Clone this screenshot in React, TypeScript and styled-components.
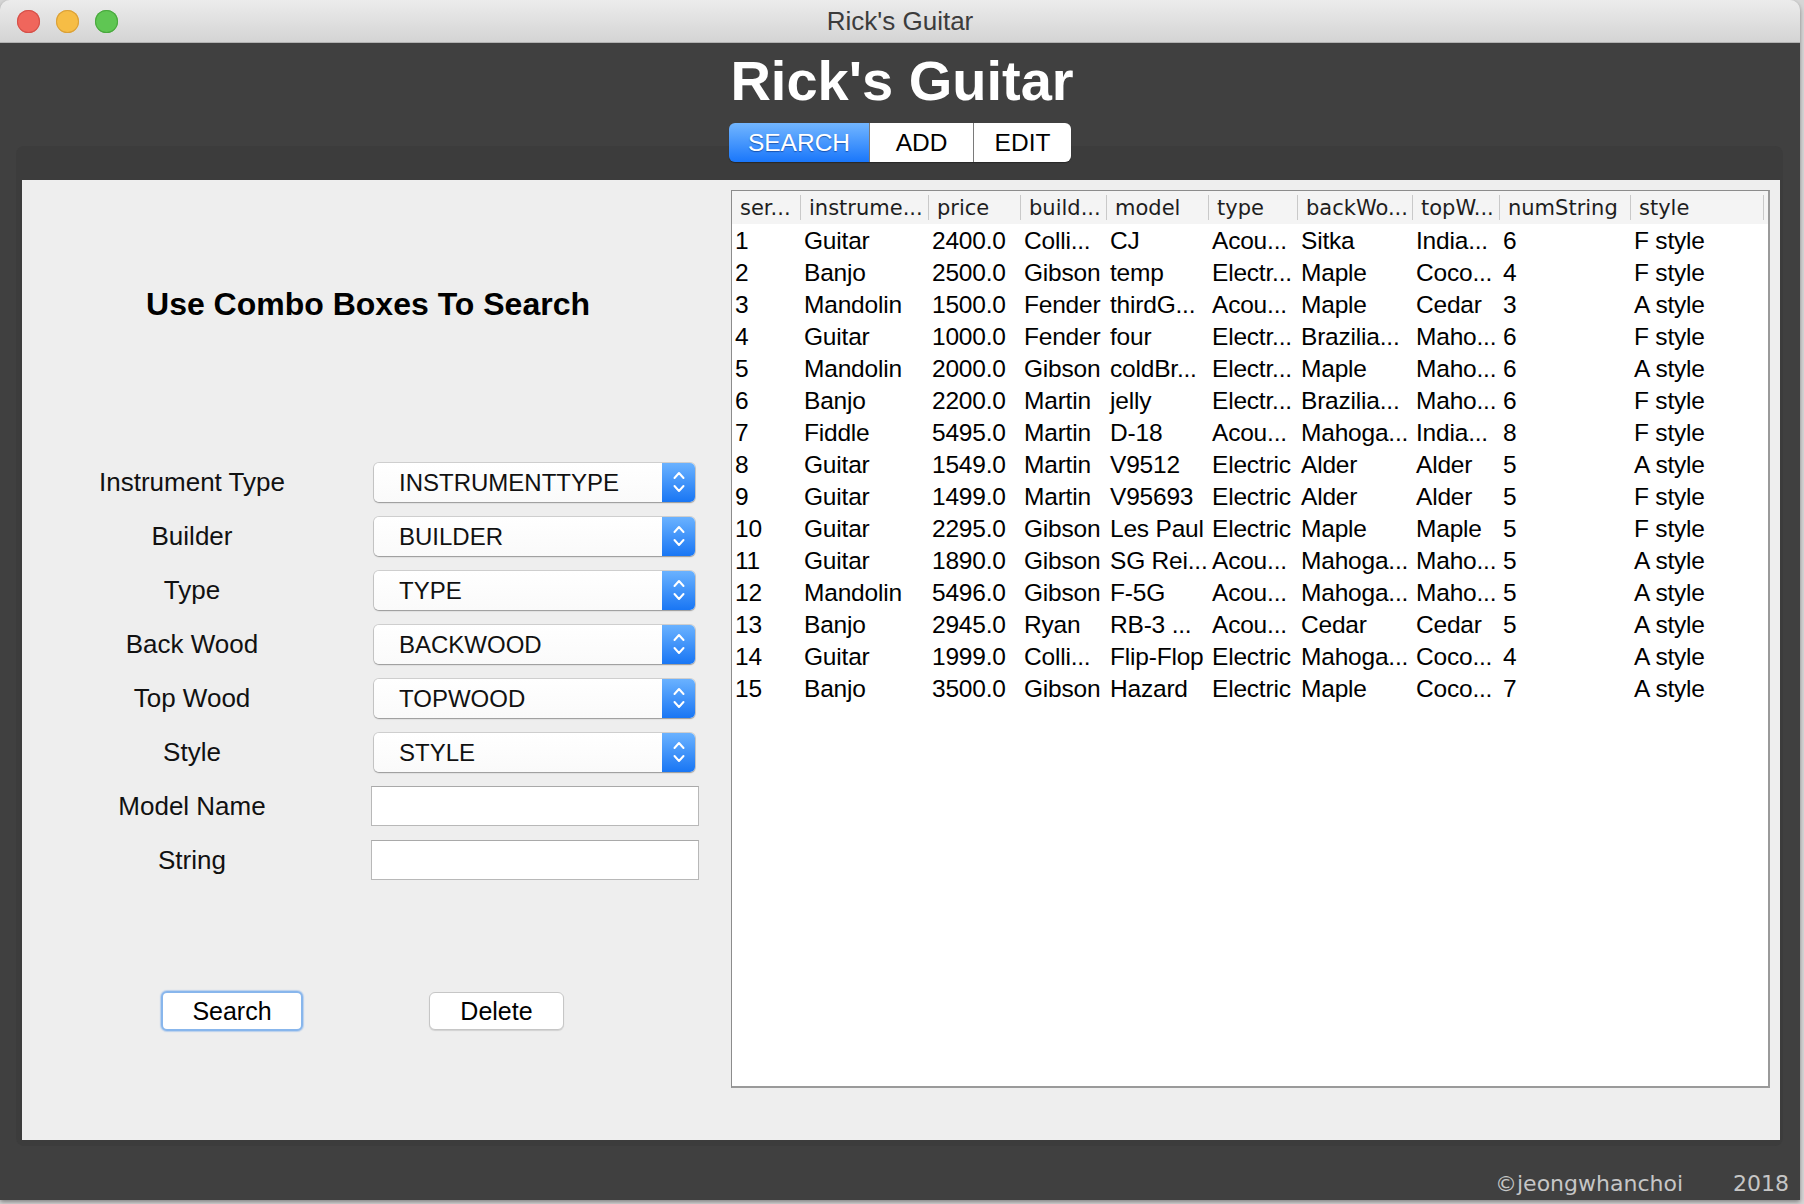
import React from "react";
import styled, { createGlobalStyle } from "styled-components";

const GlobalStyle = createGlobalStyle`
  html, body { margin: 0; padding: 0; }
  body {
    background: #d6d6d6;
    width: 1804px;
    height: 1204px;
    overflow: hidden;
    font-family: "Liberation Sans", Arial, sans-serif;
  }
  * { box-sizing: border-box; }
`;

const COLS = "69px 128px 92px 86px 102px 89px 115px 87px 131px 133px 1fr";

const Window = styled.div`
  width: 1800px;
  height: 1200px;
  display: flex;
  flex-direction: column;
  border-radius: 10px 10px 0 0;
  overflow: hidden;
  box-shadow: 0 2px 4px rgba(0, 0, 0, 0.4);
`;

const TitleBar = styled.header`
  height: 43px;
  border-bottom: 1px solid #b2b2b2;
  background: linear-gradient(#ececec, #d4d4d4);
  display: grid;
  grid-template-columns: 200px 1fr 200px;
  align-items: center;
`;

const Lights = styled.div`
  display: flex;
  gap: 16px;
  padding-left: 17px;
`;

const Light = styled.span<{ $c: string; $b: string }>`
  width: 23px;
  height: 23px;
  border-radius: 50%;
  background: ${(p) => p.$c};
  box-shadow: inset 0 0 0 1px ${(p) => p.$b};
`;

const WindowTitle = styled.div`
  text-align: center;
  font: 26px/30px "Liberation Sans", Arial, sans-serif;
  color: #3c3c3c;
`;

const Main = styled.main`
  flex: 1;
  background: #404040;
  display: flex;
  flex-direction: column;
  align-items: center;
`;

const Heading = styled.h1`
  margin: 6px 0 0 4px;
  font: bold 56px/64px "Liberation Sans", Arial, sans-serif;
  color: #ffffff;
`;

const Tabs = styled.div`
  margin-top: 10px;
  display: flex;
  height: 39px;
  position: relative;
  z-index: 1;
  border-radius: 6px;
  overflow: hidden;
  box-shadow: 0 1px 1px rgba(0, 0, 0, 0.35);
`;

const Tab = styled.div<{ $active?: boolean; $w: number }>`
  width: ${(p) => p.$w}px;
  display: flex;
  align-items: center;
  justify-content: center;
  font: 24.5px/39px "Liberation Sans", Arial, sans-serif;
  color: ${(p) => (p.$active ? "#ffffff" : "#000000")};
  background: ${(p) =>
    p.$active ? "linear-gradient(#72b6ff, #1a77fb)" : "#ffffff"};
  text-shadow: ${(p) => (p.$active ? "0 1px 1px rgba(0, 40, 120, 0.55)" : "none")};
  & + & {
    border-left: 1px solid #7a7a7a;
  }
`;

const Pane = styled.section`
  align-self: flex-start;
  margin: -16px 0 0 16px;
  width: 1767px;
  padding: 34px 3px 6px 6px;
  background: #3c3c3c;
  border-radius: 8px;
`;

const Content = styled.div`
  height: 960px;
  background: #eeeeee;
  display: grid;
  grid-template-columns: 709px 1fr;
  padding: 10px 10px 52px 0;
`;

const LeftCol = styled.div`
  display: flex;
  flex-direction: column;
  padding-top: 96px;
`;

const FormTitle = styled.h2`
  margin: 0;
  padding-right: 17px;
  text-align: center;
  font: bold 32px/37px "Liberation Sans", Arial, sans-serif;
  color: #000;
`;

const Form = styled.div`
  margin-top: 139px;
  display: grid;
  grid-template-columns: 340px 1fr;
  grid-auto-rows: 40px;
  column-gap: 9px;
  row-gap: 14px;
  align-items: center;
`;

const Label = styled.label`
  text-align: center;
  font: 26px/30px "Liberation Sans", Arial, sans-serif;
  color: #111;
`;

const Combo = styled.div`
  margin-left: 3px;
  width: 321px;
  height: 39px;
  display: flex;
  border-radius: 5px;
  background: linear-gradient(#ffffff, #fafafa);
  box-shadow: 0 0 0 1px rgba(0, 0, 0, 0.13), 0 1px 1.5px rgba(0, 0, 0, 0.28);
  overflow: hidden;
`;

const ComboText = styled.span`
  flex: 1;
  padding-left: 25px;
  font: 24px/39px "Liberation Sans", Arial, sans-serif;
  color: #111;
`;

const ComboArrow = styled.span`
  width: 33px;
  background: linear-gradient(#6ab2ff, #1976f4);
  display: flex;
  align-items: center;
  justify-content: center;
`;

const TextField = styled.div`
  width: 328px;
  height: 40px;
  background: #ffffff;
  border: 1px solid #b8b8b8;
  border-top-color: #a9a9a9;
`;

const Buttons = styled.div`
  margin-top: 111px;
  display: flex;
  align-items: center;
  gap: 126px;
  padding-left: 139px;
`;

const Button = styled.div<{ $focused?: boolean; $w: number }>`
  width: ${(p) => p.$w}px;
  height: ${(p) => (p.$focused ? 40 : 38)}px;
  display: flex;
  align-items: center;
  justify-content: center;
  border-radius: 6px;
  background: #ffffff;
  font: 25px/30px "Liberation Sans", Arial, sans-serif;
  color: #000;
  border: ${(p) => (p.$focused ? "2px solid #88b6ec" : "1px solid #c6c6c6")};
  box-shadow: ${(p) =>
    p.$focused ? "0 0 1px 1px rgba(120, 170, 235, 0.45)" : "0 1px 1px rgba(0, 0, 0, 0.12)"};
`;

const Table = styled.div`
  background: #ffffff;
  border: 1px solid #8c8c8c;
  border-right: 2px solid #9a9a9a;
  border-bottom: 2px solid #9a9a9a;
  display: flex;
  flex-direction: column;
  overflow: hidden;
`;

const HeaderRow = styled.div`
  display: grid;
  grid-template-columns: ${COLS};
  height: 33px;
  background: #f4f4f4;
`;

const HeaderCell = styled.div<{ $divider?: boolean }>`
  position: relative;
  padding-left: 8px;
  font: 21px/34px "DejaVu Sans", Verdana, sans-serif;
  color: #1e1e1e;
  white-space: nowrap;
  overflow: hidden;
  &::after {
    content: "";
    display: ${(p) => (p.$divider ? "block" : "none")};
    position: absolute;
    right: 0;
    top: 4px;
    bottom: 4px;
    width: 1px;
    background: #c9c9c9;
  }
`;

const Rows = styled.div`
  padding-top: 1px;
`;

const Row = styled.div`
  display: grid;
  grid-template-columns: ${COLS};
  height: 32px;
`;

const Cell = styled.div`
  padding-left: 3px;
  font: 24.5px/32px "Liberation Sans", Arial, sans-serif;
  letter-spacing: -0.2px;
  color: #000;
  white-space: nowrap;
  overflow: hidden;
`;

const Footer = styled.footer`
  align-self: stretch;
  flex: 1;
  display: flex;
  justify-content: flex-end;
  align-items: flex-end;
  gap: 50px;
  padding: 0 11px 3px 0;
  font: 22px/27px "DejaVu Sans", Verdana, sans-serif;
  color: #c6c6c6;
`;

const headers = [
  "ser...",
  "instrume...",
  "price",
  "build...",
  "model",
  "type",
  "backWo...",
  "topW...",
  "numString",
  "style",
  "",
];

const data: string[][] = [
  ["1", "Guitar", "2400.0", "Colli...", "CJ", "Acou...", "Sitka", "India...", "6", "F style"],
  ["2", "Banjo", "2500.0", "Gibson", "temp", "Electr...", "Maple", "Coco...", "4", "F style"],
  ["3", "Mandolin", "1500.0", "Fender", "thirdG...", "Acou...", "Maple", "Cedar", "3", "A style"],
  ["4", "Guitar", "1000.0", "Fender", "four", "Electr...", "Brazilia...", "Maho...", "6", "F style"],
  ["5", "Mandolin", "2000.0", "Gibson", "coldBr...", "Electr...", "Maple", "Maho...", "6", "A style"],
  ["6", "Banjo", "2200.0", "Martin", "jelly", "Electr...", "Brazilia...", "Maho...", "6", "F style"],
  ["7", "Fiddle", "5495.0", "Martin", "D-18", "Acou...", "Mahoga...", "India...", "8", "F style"],
  ["8", "Guitar", "1549.0", "Martin", "V9512", "Electric", "Alder", "Alder", "5", "A style"],
  ["9", "Guitar", "1499.0", "Martin", "V95693", "Electric", "Alder", "Alder", "5", "F style"],
  ["10", "Guitar", "2295.0", "Gibson", "Les Paul", "Electric", "Maple", "Maple", "5", "F style"],
  ["11", "Guitar", "1890.0", "Gibson", "SG Rei...", "Acou...", "Mahoga...", "Maho...", "5", "A style"],
  ["12", "Mandolin", "5496.0", "Gibson", "F-5G", "Acou...", "Mahoga...", "Maho...", "5", "A style"],
  ["13", "Banjo", "2945.0", "Ryan", "RB-3 ...", "Acou...", "Cedar", "Cedar", "5", "A style"],
  ["14", "Guitar", "1999.0", "Colli...", "Flip-Flop", "Electric", "Mahoga...", "Coco...", "4", "A style"],
  ["15", "Banjo", "3500.0", "Gibson", "Hazard", "Electric", "Maple", "Coco...", "7", "A style"],
];

const combos = [
  ["Instrument Type", "INSTRUMENTTYPE"],
  ["Builder", "BUILDER"],
  ["Type", "TYPE"],
  ["Back Wood", "BACKWOOD"],
  ["Top Wood", "TOPWOOD"],
  ["Style", "STYLE"],
];

const Chevrons = () => (
  <svg width="14" height="26" viewBox="0 0 14 26" fill="none">
    <path d="M2.5 9 L7 4 L11.5 9" stroke="#fff" strokeWidth="2" strokeLinecap="round" strokeLinejoin="round" />
    <path d="M2.5 17 L7 22 L11.5 17" stroke="#fff" strokeWidth="2" strokeLinecap="round" strokeLinejoin="round" />
  </svg>
);

export default function App() {
  return (
    <>
      <GlobalStyle />
      <Window>
        <TitleBar>
          <Lights>
            <Light $c="#f0665c" $b="#d4514a" />
            <Light $c="#f6bd45" $b="#d9a03a" />
            <Light $c="#5fc653" $b="#4aa83f" />
          </Lights>
          <WindowTitle>Rick's Guitar</WindowTitle>
          <div />
        </TitleBar>
        <Main>
          <Heading>Rick's Guitar</Heading>
          <Tabs>
            <Tab $active $w={140}>SEARCH</Tab>
            <Tab $w={104}>ADD</Tab>
            <Tab $w={98}>EDIT</Tab>
          </Tabs>
          <Pane>
            <Content>
              <LeftCol>
                <FormTitle>Use Combo Boxes To Search</FormTitle>
                <Form>
                  {combos.map(([label, value]) => (
                    <React.Fragment key={label}>
                      <Label>{label}</Label>
                      <Combo>
                        <ComboText>{value}</ComboText>
                        <ComboArrow>
                          <Chevrons />
                        </ComboArrow>
                      </Combo>
                    </React.Fragment>
                  ))}
                  <Label>Model Name</Label>
                  <TextField />
                  <Label>String</Label>
                  <TextField />
                </Form>
                <Buttons>
                  <Button $focused $w={142}>Search</Button>
                  <Button $w={135}>Delete</Button>
                </Buttons>
              </LeftCol>
              <Table>
                <HeaderRow>
                  {headers.map((h, i) => (
                    <HeaderCell key={i} $divider={i < headers.length - 1}>
                      {h}
                    </HeaderCell>
                  ))}
                </HeaderRow>
                <Rows>
                  {data.map((row) => (
                    <Row key={row[0]}>
                      {row.map((c, i) => (
                        <Cell key={i}>{c}</Cell>
                      ))}
                    </Row>
                  ))}
                </Rows>
              </Table>
            </Content>
          </Pane>
          <Footer>
            <span>©jeongwhanchoi</span>
            <span>2018</span>
          </Footer>
        </Main>
      </Window>
    </>
  );
}
